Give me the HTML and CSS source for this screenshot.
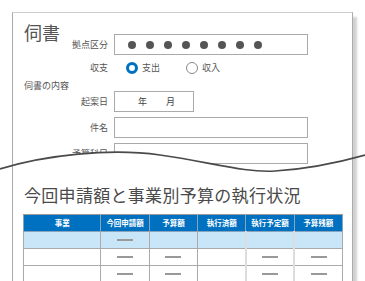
FILE: index.html
```html
<!DOCTYPE html>
<html lang="ja">
<head>
  <meta charset="UTF-8" />
  <meta name="viewport" content="width=device-width, initial-scale=1.0"/>
  <title>伺書</title>
  <link rel="stylesheet" href="styles.css">
</head>
<body>
  <div class="doc">
    <section class="form">
      <h1 class="form-title">伺書</h1>

      <div class="row">
        <span class="row-label">拠点区分</span>
        <div class="box box-wide dots">
          <span class="dot"></span><span class="dot"></span><span class="dot"></span><span class="dot"></span>
          <span class="dot"></span><span class="dot"></span><span class="dot"></span><span class="dot"></span>
        </div>
      </div>

      <div class="row row-radio">
        <span class="row-label">収支</span>
        <div class="radios">
          <span class="radio"><span class="ring checked"></span>支出</span>
          <span class="radio"><span class="ring"></span>収入</span>
        </div>
      </div>

      <div class="section-label">伺書の内容</div>

      <div class="row">
        <span class="row-label">起案日</span>
        <div class="box box-date"><span>年</span><span>月</span></div>
      </div>

      <div class="row row-gap">
        <span class="row-label">件名</span>
        <div class="box box-wide"></div>
      </div>

      <div class="row row-gap">
        <span class="row-label">予算科目</span>
        <div class="box box-wide"></div>
      </div>
    </section>

    <section class="report">
      <h2 class="report-title">今回申請額と事業別予算の執行状況</h2>
      <table class="budget">
        <colgroup>
          <col class="col-name"><col class="col-num"><col class="col-num">
          <col class="col-num"><col class="col-num"><col class="col-num">
        </colgroup>
        <thead>
          <tr>
            <th>事業</th><th>今回申請額</th><th>予算額</th><th>執行済額</th><th>執行予定額</th><th>予算残額</th>
          </tr>
        </thead>
        <tbody>
          <tr class="current">
            <td></td><td><span class="dash"></span></td><td></td><td></td><td class="soft"></td><td class="soft"></td>
          </tr>
          <tr>
            <td></td><td><span class="dash"></span></td><td><span class="dash"></span></td><td></td><td class="soft"><span class="dash"></span></td><td class="soft"><span class="dash"></span></td>
          </tr>
          <tr>
            <td></td><td><span class="dash"></span></td><td><span class="dash"></span></td><td></td><td class="soft"><span class="dash"></span></td><td class="soft"><span class="dash"></span></td>
          </tr>
          <tr>
            <td></td><td><span class="dash"></span></td><td><span class="dash"></span></td><td></td><td class="soft"><span class="dash"></span></td><td class="soft"><span class="dash"></span></td>
          </tr>
        </tbody>
      </table>
    </section>
  </div>

  <!-- torn edge between the form and the report -->
  <svg class="cut" width="365" height="200" viewBox="0 0 365 200">
    <defs>
      <clipPath id="inside">
        <rect x="13" y="0" width="339" height="200"/>
      </clipPath>
    </defs>
    <path clip-path="url(#inside)" fill="#fff"
          d="M0,169 C45,155 110,148 160,155 C210,162 245,173 275,171 C305,169 340,162 365,155 L365,182 L0,182 Z"/>
    <path fill="none" stroke="#4a4a4a" stroke-width="1.7"
          d="M0,169 C45,155 110,148 160,155 C210,162 245,173 275,171 C305,169 340,162 365,155"/>
  </svg>
</body>
</html>
```

FILE: styles.css
```css
body {
  margin: 0;
  background-color: #fff;
  color: #555;
  font-family: "Noto Sans CJK JP", "Noto Sans", sans-serif;
  position: relative;
  overflow: hidden;
}
.doc {
  margin: 12px 0 0 12px;
  width: 339px;
  height: 400px;
  border: 1px solid #aaa;
  border-top-color: #ccc;
  box-shadow: 5px 4px 2px -1px rgba(0,0,0,0.18);
  background-color: #fff;
}
.form {
  height: 162px;
  overflow: hidden;
  padding: 8px 0 0 11px;
  box-sizing: border-box;
}
.form-title {
  margin: 0 0 -9px;
  font-size: 18px;
  line-height: 22px;
  font-weight: normal;
  color: #555;
}
.row {
  display: flex;
  align-items: center;
  gap: 6px;
  height: 21px;
  font-size: 9px;
}
.row-gap {
  margin-top: 5px;
}
.row-label {
  width: 95px;
  margin-left: -11px;
  text-align: right;
}
.box {
  height: 21px;
  box-sizing: border-box;
  border: 1px solid #aaa;
  background-color: #fff;
}
.box-wide {
  width: 194px;
}
.box-date {
  width: 80px;
  display: flex;
  align-items: center;
  gap: 19px;
  padding-left: 23px;
  color: #444;
}
.dots {
  display: flex;
  align-items: center;
  gap: 10px;
  padding-left: 13px;
}
.dot {
  width: 8px;
  height: 8px;
  border-radius: 50%;
  background-color: #555;
}
.row-radio {
  height: 25px;
}
.radios {
  display: flex;
  align-items: center;
  gap: 26px;
  padding-left: 12px;
}
.radio {
  display: flex;
  align-items: center;
  gap: 4px;
}
.ring {
  width: 12px;
  height: 12px;
  box-sizing: border-box;
  border-radius: 50%;
  border: 1px solid #888;
}
.ring.checked {
  border: 3px solid #0070c0;
}
.section-label {
  height: 11px;
  line-height: 11px;
  font-size: 9px;
}
.report {
  padding: 10px 0 0 11px;
}
.report-title {
  margin: 0 0 9px;
  font-size: 17px;
  line-height: 20px;
  font-weight: normal;
  letter-spacing: 0.3px;
  color: #4a4a4a;
}
.budget {
  margin-left: -1px;
  width: 320px;
  border-collapse: collapse;
  table-layout: fixed;
  border: 1px solid #999;
}
.col-name {
  width: 77px;
}
.col-num {
  width: 48px;
}
.budget th {
  height: 16px;
  padding: 0;
  background-color: #0070c0;
  color: #fff;
  font-size: 7.5px;
  line-height: 16px;
  font-weight: bold;
  border: 1px solid #8aa4bb;
  border-top-color: #999;
}
.budget td {
  height: 16px;
  padding: 0;
  font-size: 0;
  line-height: 0;
  text-align: center;
  border: 1px solid #aaa;
}
.budget td.soft {
  border-left: 2px solid #ddd;
}
.budget tr.current td {
  background-color: #c8e6f8;
}
.dash {
  display: inline-block;
  width: 16px;
  height: 2px;
  background-color: #999;
  vertical-align: middle;
}
.cut {
  position: absolute;
  top: 0;
  left: 0;
  pointer-events: none;
}
```
